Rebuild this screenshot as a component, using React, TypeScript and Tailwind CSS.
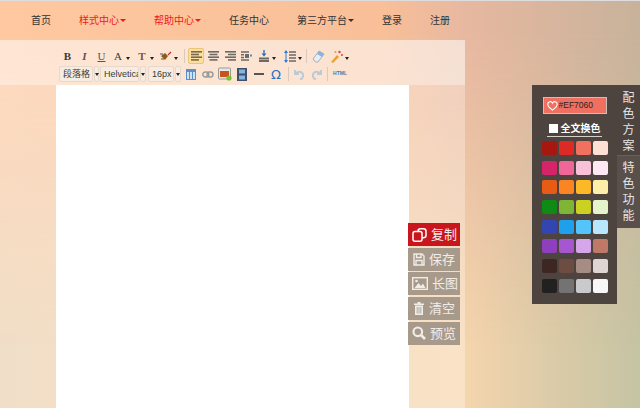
import React from "react";

const navItems: [string, boolean, boolean][] = [
  ["首页", false, false],
  ["样式中心", true, true],
  ["帮助中心", true, true],
  ["任务中心", false, false],
  ["第三方平台", false, true],
  ["登录", false, false],
  ["注册", false, false],
];

const swatches = [
  ["#a8170f", "#dd2a26", "#f2705f", "#fde0d3"],
  ["#d6246a", "#ef6799", "#f7c2d8", "#fde8f3"],
  ["#e75b14", "#fb8522", "#fdb827", "#fdeeaa"],
  ["#0f8a14", "#7fb535", "#cbd122", "#e6f4cc"],
  ["#3345b0", "#1fa0ec", "#55c4fb", "#b8e6fd"],
  ["#8e3fbe", "#a656cf", "#d5a6ea", "#be7a66"],
  ["#3e2723", "#6d4c41", "#a68d83", "#dfd5d2"],
  ["#212121", "#737373", "#c8cacc", "#f7f7f7"],
];

function Caret({ c = "#222" }: { c?: string }) {
  return <span className="inline-block w-0 h-0 border-x-[2.5px] border-x-transparent border-t-[3px]" style={{ borderTopColor: c }} />;
}

function NavCaret({ c }: { c: string }) {
  return <span className="inline-block w-0 h-0 border-x-[3px] border-x-transparent border-t-[3px]" style={{ borderTopColor: c }} />;
}

function Lines({ kind, c = "#6e6a66" }: { kind: "l" | "c" | "r"; c?: string }) {
  const rows = [0, 1, 2, 3];
  return (
    <svg width="11" height="10" viewBox="0 0 11 10">
      {rows.map((r) => {
        const w = r % 2 === 0 ? 11 : 8;
        const x = kind === "l" ? 0 : kind === "c" ? (11 - w) / 2 : 11 - w;
        return <rect key={r} x={x} y={r * 2.7} width={w} height="1.6" fill={c} />;
      })}
    </svg>
  );
}

function Sel({ t, main, caret }: { t: string; main: string; caret: string }) {
  return (
    <div className="flex h-[16px] gap-px font-['Liberation_Sans','Noto_Sans_CJK_SC',sans-serif]">
      <div className={`${main} h-full bg-[#f6ece2] border border-[#e6d8ca] rounded-[2px] flex items-center pl-[3px] overflow-hidden`}>
        <span className="text-[9px] leading-none whitespace-nowrap text-[#3a3a3a]">{t}</span>
      </div>
      <div className={`${caret} h-full bg-[#f6ece2] border border-[#e6d8ca] rounded-[2px] flex items-center justify-center`}>
        <Caret />
      </div>
    </div>
  );
}

function Sep({ w }: { w: string }) {
  return (
    <span className={`${w} flex justify-center`}>
      <span className="w-px h-[14px] bg-[#d8cabc]" />
    </span>
  );
}

function Toolbar() {
  return (
    <div className="h-[45px] bg-white/35 pl-[59px] pt-[8px] flex flex-col gap-[2px] font-['Liberation_Serif',serif]">
      <div className="flex items-center h-[16px] text-[#3a3a3a] text-[11px] leading-none">
        <span className="w-[17px] text-center font-bold">B</span>
        <span className="w-[17px] text-center italic font-bold text-[#555]">I</span>
        <span className="w-[17px] text-center underline text-[#555]">U</span>
        <span className="w-[16px] text-center">A</span>
        <span className="w-[8px]"><Caret /></span>
        <span className="w-[16px] text-center font-bold text-[#85523c]">T</span>
        <span className="w-[8px]"><Caret /></span>
        <span className="w-[16px] flex justify-center">
          <svg width="13" height="11" viewBox="0 0 13 11"><path d="M1 5l4-3 3 3-3 4z" fill="#8a6010" /><path d="M8 4l3-3" stroke="#c03030" strokeWidth="1.2" /><path d="M0 3h3M1 8h3" stroke="#555" /></svg>
        </span>
        <span className="w-[7px]"><Caret /></span>
        <Sep w="w-[7px]" />
        <span className="w-[16px] h-[16px] bg-[#fbdf9a] border border-[#e8c47c] rounded-[2px] flex items-center justify-center"><Lines kind="l" c="#7a6a50" /></span>
        <span className="w-[18px] flex justify-center"><Lines kind="c" /></span>
        <span className="w-[16px] flex justify-center"><Lines kind="r" /></span>
        <span className="w-[17px] flex justify-center">
          <svg width="11" height="10" viewBox="0 0 11 10"><path d="M0 1h8M0 3.800h3M0 6.400h3M0 9h8" stroke="#6e6a66" strokeWidth="1.500" /><rect x="4" y="3" width="4" height="4" fill="#6e6a66" /><rect x="9" y="3.500" width="2" height="2" fill="#4a90d9" /></svg>
        </span>
        <span className="w-[17px] flex justify-center">
          <svg width="12" height="12" viewBox="0 0 12 12"><path d="M1 8.500h10M1 11h10" stroke="#6e6a66" strokeWidth="2" /><path d="M6 0v5" stroke="#2a6fc0" strokeWidth="1.400" /><path d="M3.500 3.500L6 6.500l2.500-3z" fill="#2a6fc0" /></svg>
        </span>
        <span className="w-[10px]"><Caret /></span>
        <span className="w-[16px] flex justify-center">
          <svg width="12" height="13" viewBox="0 0 12 13"><path d="M2 0l2 3H0zM2 13l2-3H0z" fill="#2a78d0" /><path d="M2 3v7" stroke="#2a78d0" /><path d="M5 2h7M5 5h7M5 8h7M5 11h7" stroke="#6e6a66" strokeWidth="1.400" /></svg>
        </span>
        <span className="w-[6px]"><Caret /></span>
        <Sep w="w-[5px]" />
        <span className="w-[19px] flex justify-center">
          <svg width="13" height="13" viewBox="0 0 13 13"><path d="M1 9l6-8 5 3-6 8H3.500z" fill="#e8edf2" stroke="#a0b0c0" /><path d="M7 1l5 3-2 3-5-3z" fill="#85b4e0" /></svg>
        </span>
        <span className="w-[17px] flex justify-center">
          <svg width="13" height="13" viewBox="0 0 13 13"><path d="M1 12l6-7 2 2-6 6z" fill="#eaa22f" /><circle cx="9.500" cy="2" r="1.200" fill="#e04040" /><circle cx="12" cy="5" r="1" fill="#e04040" /><circle cx="5.500" cy="2" r="1" fill="#e0a020" /></svg>
        </span>
        <span className="w-[7px]"><Caret /></span>
      </div>
      <div className="flex items-center h-[16px]">
        <Sel t="段落格" main="w-[34px]" caret="w-[5px]" />
        <span className="w-[1px]" />
        <Sel t="Helvetica" main="w-[39px]" caret="w-[6px]" />
        <span className="w-[2px]" />
        <Sel t="16px" main="w-[26px]" caret="w-[6px]" />
        <span className="w-[19px] flex justify-center">
          <svg width="10" height="11" viewBox="0 0 10 11"><rect x=".5" y=".5" width="9" height="10" fill="#cfe2f6" stroke="#5f8fc5" /><rect x=".5" y=".5" width="9" height="2.500" fill="#5f8fc5" /><path d="M3.500 3v7M6.500 3v7" stroke="#5f8fc5" /></svg>
        </span>
        <span className="w-[16px] flex justify-center">
          <svg width="12" height="7" viewBox="0 0 12 7"><rect x=".8" y="1" width="6" height="5" rx="2.500" fill="none" stroke="#9a9a9a" strokeWidth="1.400" /><rect x="5" y="1" width="6" height="5" rx="2.500" fill="none" stroke="#9a9a9a" strokeWidth="1.400" /></svg>
        </span>
        <span className="w-[17px] flex justify-center">
          <svg width="14" height="14" viewBox="0 0 14 14"><rect x=".5" y="1" width="12" height="11" rx="1" fill="#e8e8e8" stroke="#999" /><rect x="2" y="4" width="9" height="6" fill="#c8541c" /><circle cx="11" cy="11" r="2.600" fill="#7ac231" /></svg>
        </span>
        <span className="w-[17px] flex justify-center">
          <svg width="10" height="13" viewBox="0 0 10 13"><rect width="10" height="13" fill="#3f5068" /><rect x="2" y="1.500" width="6" height="4" fill="#85b4e0" /><rect x="2" y="7.500" width="6" height="4" fill="#85b4e0" /></svg>
        </span>
        <span className="w-[17px] flex justify-center"><span className="w-[10px] h-[2px] bg-[#555]" /></span>
        <span className="w-[18px] text-center text-[13px] leading-none text-[#1f72c4] font-['DejaVu_Sans',sans-serif]">Ω</span>
        <Sep w="w-[6px]" />
        <span className="w-[16px] flex justify-center">
          <svg width="10" height="11" viewBox="0 0 10 11"><path d="M1 1v4h4M1.500 5C3 2 8 2 9 5.500 9.500 8 8 10 6 10.500" fill="none" stroke="#bccad6" strokeWidth="2" /></svg>
        </span>
        <span className="w-[20px] flex justify-center">
          <svg width="10" height="11" viewBox="0 0 10 11"><path d="M9 1v4H5M8.500 5C7 2 2 2 1 5.500.5 8 2 10 4 10.500" fill="none" stroke="#bccad6" strokeWidth="2" /></svg>
        </span>
        <Sep w="w-[1px]" />
        <span className="w-[24px] text-center text-[5px] font-bold text-[#4a78a8] font-['Liberation_Sans',sans-serif]">HTML</span>
      </div>
    </div>
  );
}

function ActionBtn({ icon, t, slot, red }: { icon: React.ReactNode; t: string; slot: string; red?: boolean }) {
  return (
    <div className={`h-[23px] w-[52px] flex items-center text-[#f0ece8] text-[13px] leading-none ${red ? "bg-[#c9161d]" : "bg-[#a89a8b]"}`}>
      <span className={`${slot} flex justify-center shrink-0`}>{icon}</span>
      <span className="whitespace-nowrap">{t}</span>
    </div>
  );
}

export default function App() {
  return (
    <div className="relative w-[640px] h-[408px] overflow-hidden flex flex-col bg-[linear-gradient(to_right,#ebd0b0_0%,#f6d6ad_72%,#dccba8_86%,#c5c4a3_100%)] font-['Liberation_Sans','Noto_Sans_CJK_SC',sans-serif]">
      <div className="absolute inset-0 bg-[linear-gradient(to_right,#ffc8a0_0%,#f8bf98_60%,#e8b8a0_72%,#c8b29b_100%)] [mask-image:linear-gradient(to_bottom,#000_0%,#000_8%,rgba(0,0,0,0.75)_30%,rgba(0,0,0,0.4)_55%,transparent_85%)]" />
      <nav className="relative h-[40px] shrink-0 flex items-center pl-[17px] text-[10px] text-[#333] border-t border-[#ddd]">
        {navItems.map(([t, red, caret]) => (
          <span key={t} className={`px-[14px] flex items-center gap-[1px] whitespace-nowrap ${red ? "text-[#f01818]" : ""}`}>
            {t}
            {caret && <NavCaret c={red ? "#f01818" : "#333"} />}
          </span>
        ))}
      </nav>
      <main className="relative flex-1 w-[465px] flex flex-col bg-white/30">
        <Toolbar />
        <div className="flex-1 ml-[56px] w-[353px] bg-white" />
      </main>

      <div className="absolute left-[408px] top-[223px] flex flex-col gap-[1.7px]">
        <ActionBtn red t="复制" slot="w-[23px]" icon={<svg width="15" height="14" viewBox="0 0 15 14" fill="#c9161d" stroke="#fff" strokeWidth="1.500"><rect x="6" y=".8" width="8" height="9" rx="2.500" /><rect x="1" y="3.500" width="9" height="9.700" rx="2" /></svg>} />
        <ActionBtn t="保存" slot="w-[21px]" icon={<svg width="12" height="13" viewBox="0 0 12 13" fill="none" stroke="#f0ece8" strokeWidth="1.400"><path d="M1 1h8l2 2v9H1z" /><path d="M3.500 1v3.500h4.500V1M3 12V7.500h6V12" /></svg>} />
        <ActionBtn t="长图" slot="w-[24px]" icon={<svg width="16" height="13" viewBox="0 0 16 13"><rect x=".7" y=".7" width="14.600" height="11.600" fill="none" stroke="#f0ece8" strokeWidth="1.400" /><path d="M2.500 11l4-5 2.500 3 2-2.500 2.500 4.500z" fill="#f0ece8" /><circle cx="4.500" cy="4" r="1.300" fill="#f0ece8" /></svg>} />
        <ActionBtn t="清空" slot="w-[21px]" icon={<svg width="10" height="13" viewBox="0 0 10 13" fill="#f0ece8"><path d="M0 1.500h10V3H0zM3.500 0h3v1.500h-3zM1 3.500h8V13H1z" /><path d="M3.200 5v6.500M5 5v6.500M6.800 5v6.500" stroke="#a89a8b" strokeWidth=".8" /></svg>} />
        <ActionBtn t="预览" slot="w-[22px]" icon={<svg width="14" height="14" viewBox="0 0 14 14" fill="none" stroke="#f0ece8"><circle cx="5.800" cy="5.800" r="4.300" strokeWidth="2.200" /><path d="M9 9l4 4" strokeWidth="2.600" /></svg>} />
      </div>

      <aside className="absolute left-[532px] top-[85px] flex items-start">
        <div className="w-[85px] h-[219px] bg-[#4d433f] pt-[12px] flex flex-col items-center">
          <div className="w-[64px] h-[17px] bg-[#ef7060] border border-[#c9c0b8] flex items-center pl-[3px] gap-[1px]">
            <svg className="shrink-0" width="11" height="10" viewBox="0 0 24 22" fill="none" stroke="#fff" strokeWidth="2.400"><path d="M12 20C4 14 1.500 10.500 1.500 7a5.500 5.500 0 0 1 10.500-2.300A5.500 5.500 0 0 1 22.500 7c0 3.500-2.500 7-10.500 13z" /></svg>
            <span className="text-[8.5px] leading-none text-[#2e2320]">#EF7060</span>
          </div>
          <div className="mt-[8px] h-[15px] w-[55px] border-b border-[#d8d0c8] flex items-center justify-center gap-[3px] pb-[1px] text-[10px] font-bold text-white leading-none">
            <span className="w-[9px] h-[9px] bg-white" />全文换色
          </div>
          <div className="mt-[4px] grid grid-cols-4 gap-x-[2px] gap-y-[5.7px]">
            {swatches.flat().map((c, i) => (
              <span key={i} className="w-[15px] h-[14px] rounded-[2px]" style={{ backgroundColor: c }} />
            ))}
          </div>
        </div>
        <div className="w-[23px] h-[143px] text-[#e8e4e0] text-[12px] flex flex-col items-center leading-[16px]">
          <div className="h-[71px] w-full pt-[5px] flex flex-col items-center bg-[#4d433f] border-b border-[#6a605b]">
            <span>配</span><span>色</span><span>方</span><span>案</span>
          </div>
          <div className="h-[72px] w-full pt-[4px] flex flex-col items-center bg-[#5a504b]">
            <span>特</span><span>色</span><span>功</span><span>能</span>
          </div>
        </div>
      </aside>
    </div>
  );
}
